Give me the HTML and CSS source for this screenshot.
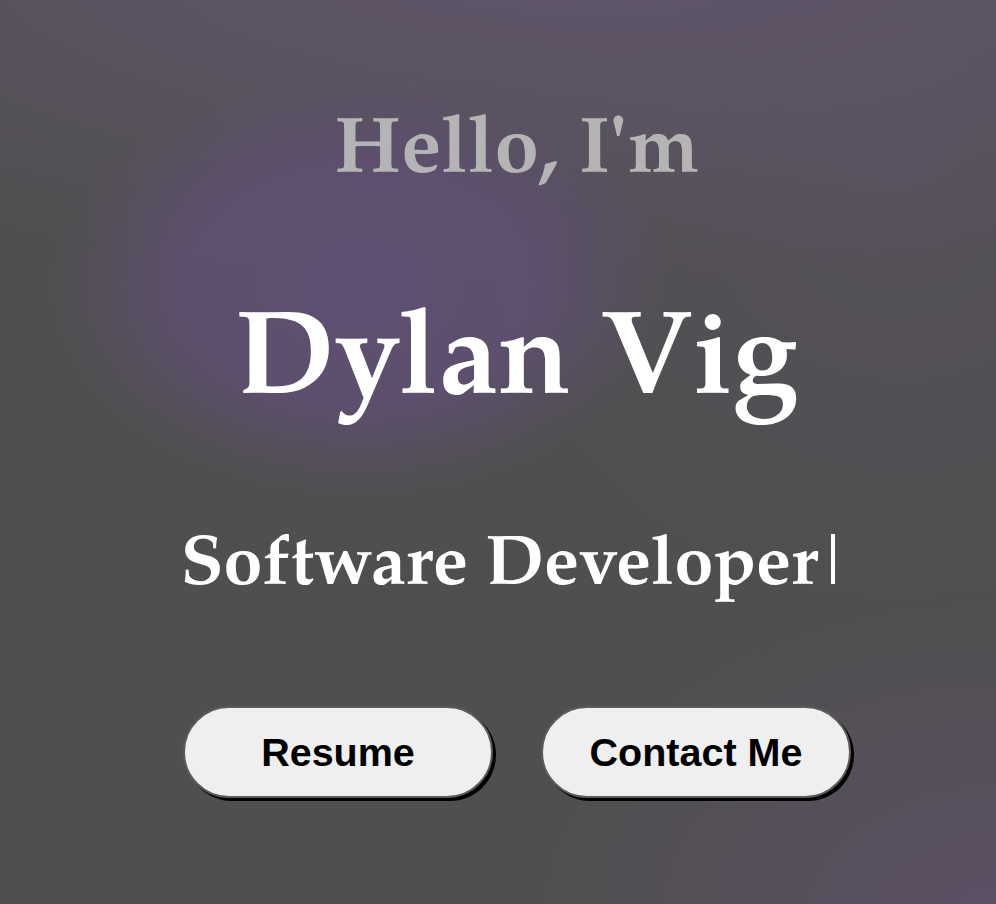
FILE: index.html
```html
<!DOCTYPE html>
<html lang="en">
<head>
<meta charset="utf-8">
<title>Dylan Vig</title>
<link rel="stylesheet" href="styles.css">
</head>
<body>
<main class="hero">
  <h2 class="greeting">Hello, I'm</h2>
  <h1 class="name">Dylan Vig</h1>
  <p class="role">Software Developer<span class="cursor"></span></p>
  <div class="actions">
    <button class="btn">Resume</button>
    <button class="btn">Contact Me</button>
  </div>
</main>
</body>
</html>
```
FILE: styles.css
```css
html, body {
  margin: 0;
  padding: 0;
  height: 100%;
}
body {
  background-color: #4f4f4f;
  background-image:
    radial-gradient(ellipse 310px 210px at 360px 285px, rgba(95, 79, 113, 1) 0%, rgba(95, 79, 113, 0.9) 55%, rgba(95, 79, 113, 0) 100%),
    radial-gradient(ellipse 1000px 340px at 560px -60px, rgba(97, 85, 108, 1) 0%, rgba(97, 85, 108, 0.6) 50%, rgba(97, 85, 108, 0) 100%),
    radial-gradient(ellipse 420px 420px at 900px 180px, rgba(92, 82, 100, 0.55), rgba(92, 82, 100, 0) 100%),
    radial-gradient(ellipse 460px 320px at 1000px 920px, rgba(94, 80, 104, 0.9), rgba(94, 80, 104, 0) 100%);
  font-family: "TeX Gyre Pagella", "Liberation Serif", serif;
  overflow: hidden;
}
.hero {
  display: flex;
  flex-direction: column;
  align-items: center;
  padding-left: 38px;
}
.greeting {
  margin: 104px 0 0;
  font-size: 80px;
  line-height: 100px;
  font-weight: bold;
  color: #b4b4b4;
}
.name {
  margin: 92px 0 0;
  font-size: 119px;
  line-height: 140px;
  font-weight: bold;
  color: #ffffff;
}
.role {
  margin: 87px 18px 0 0;
  font-size: 70px;
  line-height: 90px;
  font-weight: bold;
  color: #ffffff;
}
.cursor {
  display: inline-block;
  width: 4px;
  height: 50px;
  margin-left: 13px;
  background: #ffffff;
  vertical-align: baseline;
}
.actions {
  display: flex;
  gap: 48px;
  margin-top: 93px;
}
.btn {
  width: 310px;
  height: 92px;
  border-radius: 46px;
  border: 2px solid #5b5b5b;
  background: #efefef;
  box-shadow: 3px 3px 0 #000;
  font-family: "Liberation Sans", Arial, sans-serif;
  font-weight: bold;
  font-size: 39.5px;
  color: #000;
  padding: 0;
}
```
